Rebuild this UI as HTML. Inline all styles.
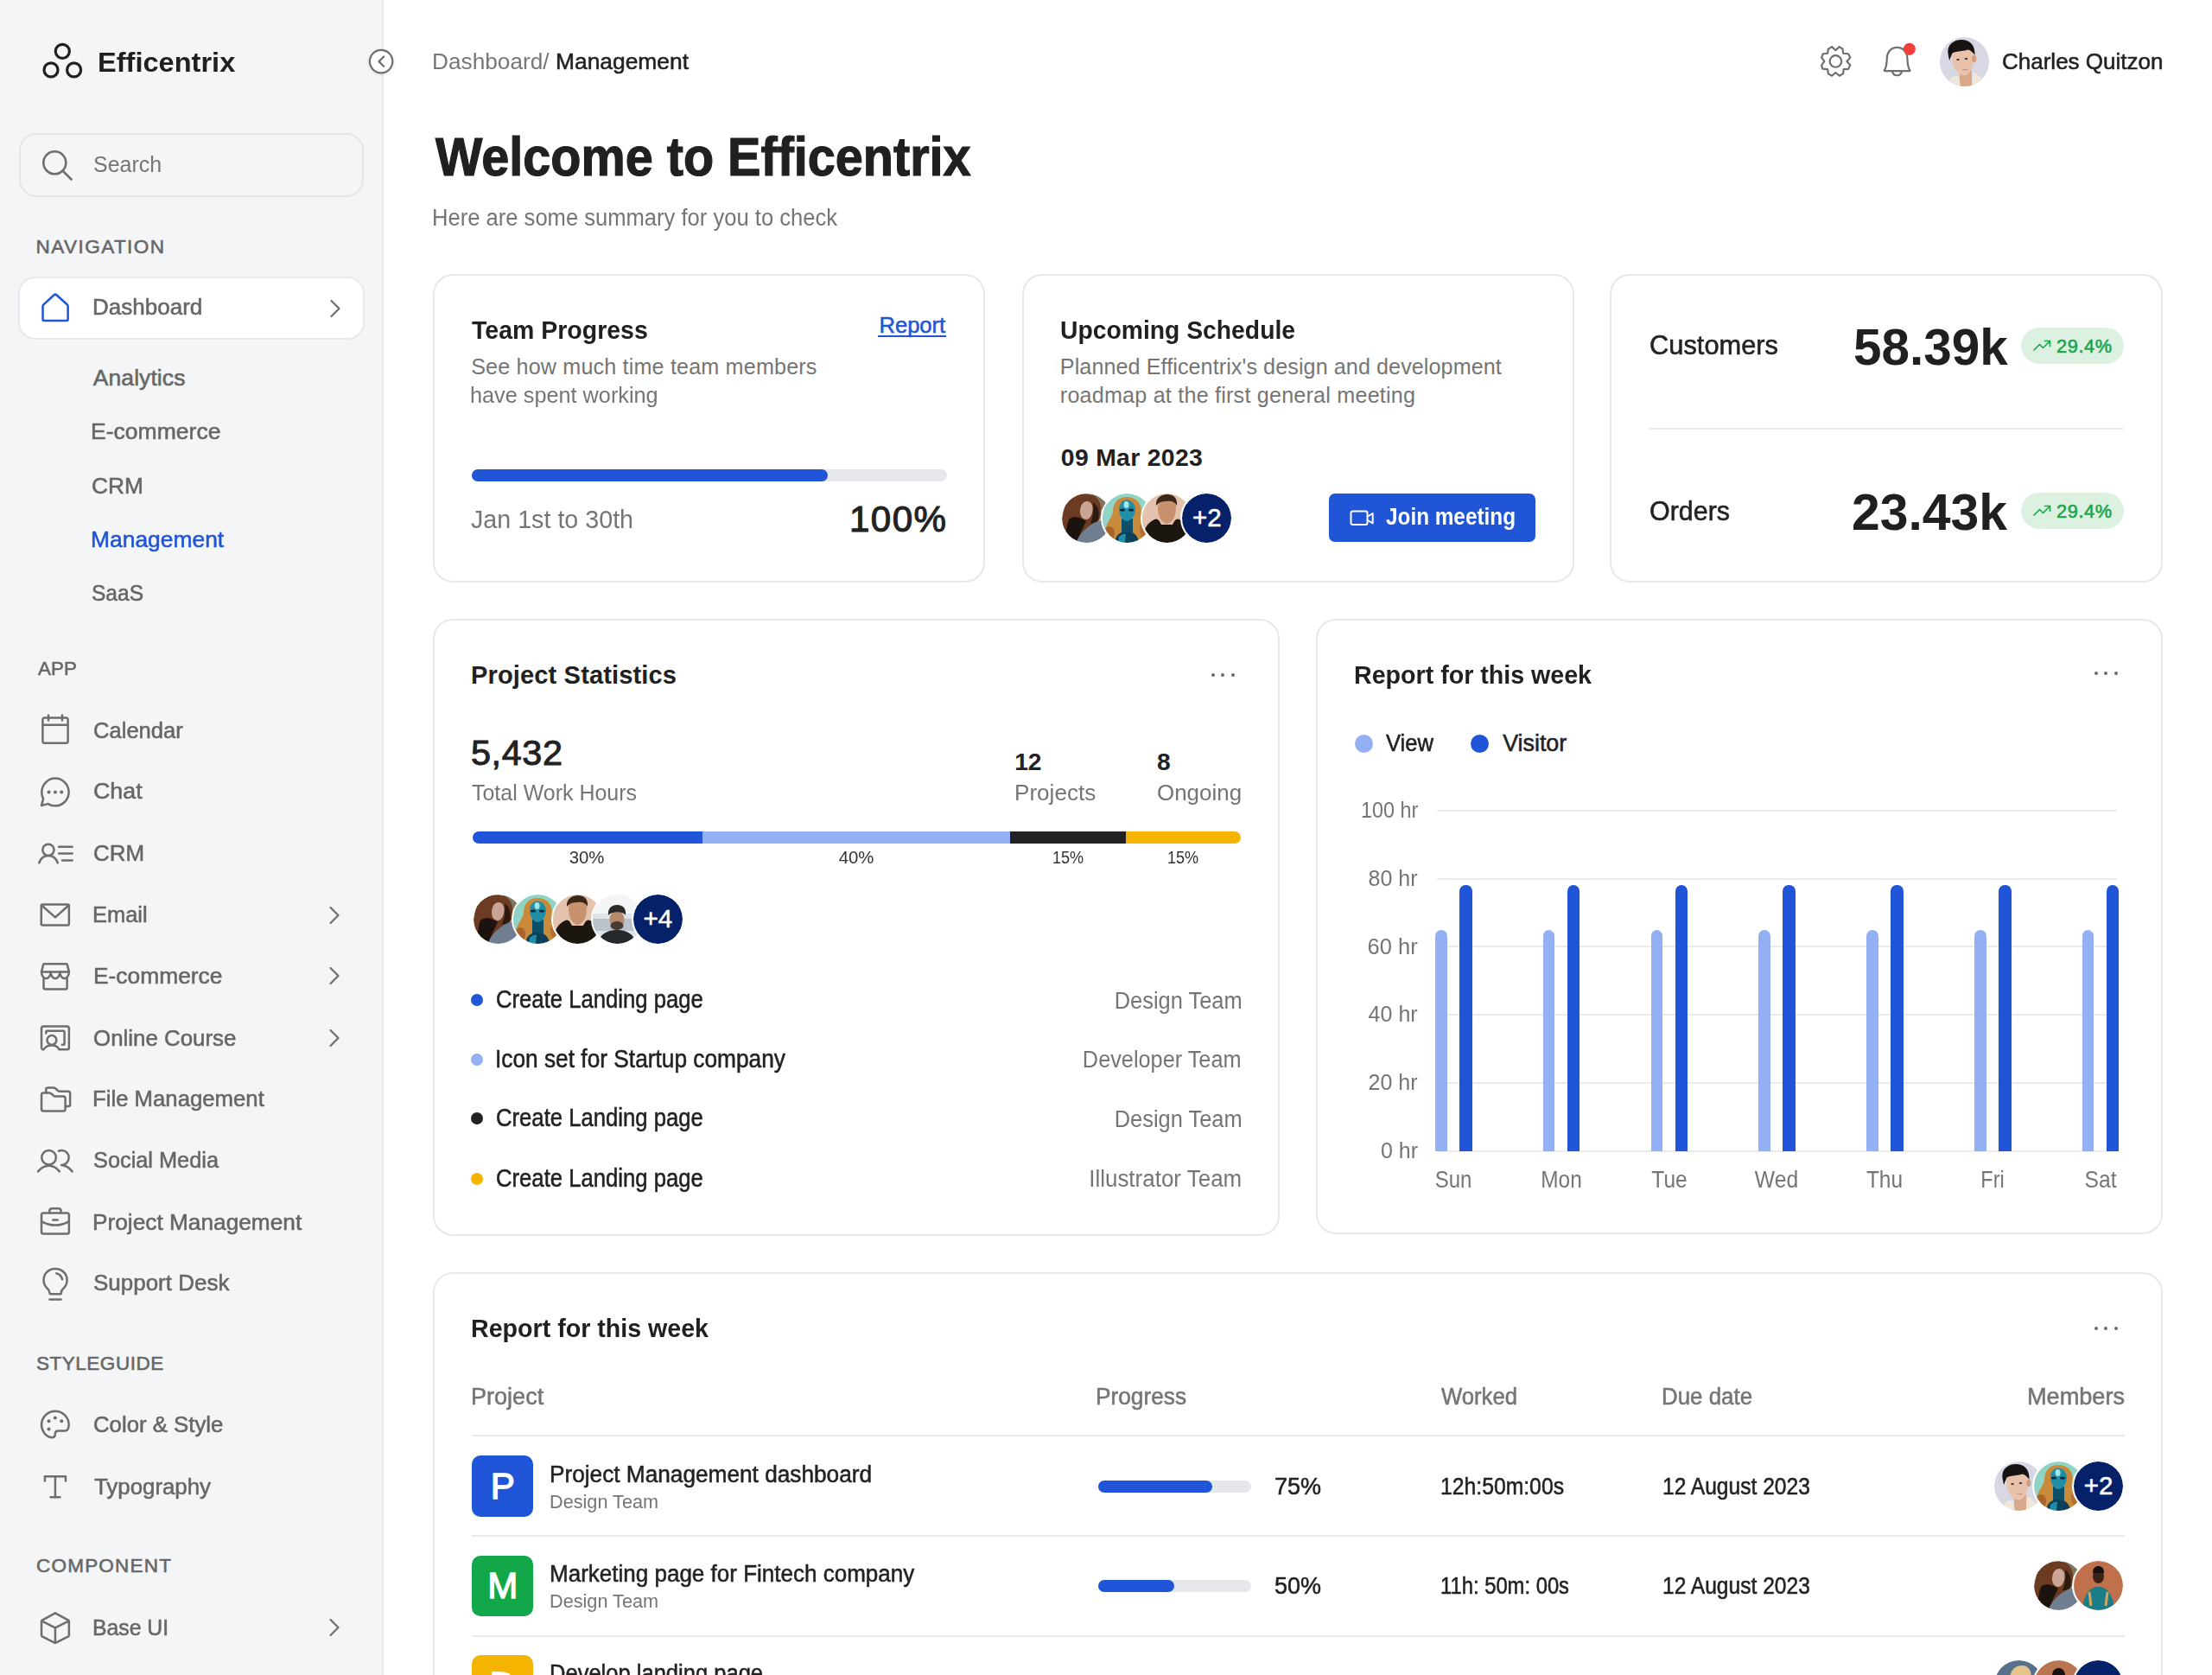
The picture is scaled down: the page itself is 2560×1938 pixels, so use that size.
<!DOCTYPE html>
<html><head><meta charset="utf-8"><title>Efficentrix</title>
<style>
html,body{margin:0;padding:0;width:2560px;height:1938px;overflow:hidden;background:#ffffff;}
body{font-family:"Liberation Sans",sans-serif;}
#root{position:relative;width:2560px;height:1938px;overflow:hidden;}
svg{overflow:visible}
</style></head><body><div id="root">
<div style='position:absolute;left:0px;top:0px;width:442px;height:1938px;background:#f4f5f7;'></div><div style='position:absolute;left:442px;top:0px;width:2px;height:1938px;background:#e9eaed;'></div><svg style='position:absolute;left:40px;top:40px;' width='60' height='60' viewBox='0 0 60 60' fill='none'><circle cx='32.3' cy='19.4' r='8' stroke='#202020' stroke-width='3.2'/><circle cx='19' cy='40.9' r='8' stroke='#202020' stroke-width='3.2'/><circle cx='45.6' cy='40.9' r='8' stroke='#202020' stroke-width='3.2'/></svg><div style='position:absolute;left:22px;top:154px;width:399px;height:74px;box-sizing:border-box;border:2px solid #e4e5e8;border-radius:20px;background:#f4f5f7;'></div><svg style='position:absolute;left:40px;top:165px;' width='50' height='50' viewBox='0 0 50 50' fill='none'><circle cx='23.3' cy='23.3' r='13' stroke='#6e6e6e' stroke-width='2.6'/><path d='M33 33 L42.5 42.5' stroke='#6e6e6e' stroke-width='2.6' stroke-linecap='round'/></svg><div style='position:absolute;left:21px;top:320px;width:401px;height:73px;box-sizing:border-box;border:2px solid #e8e9ec;border-radius:20px;background:#ffffff;'></div><svg style='position:absolute;left:40px;top:334px;' width='50' height='42' viewBox='0 0 1994 1675' fill='none'><path d='M380,810 Q380,760 430,720 L900,290 Q955,240 1010,290 L1490,720 Q1540,760 1540,820 V1420 Q1540,1480 1480,1480 H440 Q380,1480 380,1420 Z' stroke='#1f55d6' stroke-width='100' stroke-linejoin='round' fill='none'/></svg><svg style='position:absolute;left:381.5px;top:347px;' width='12' height='20' viewBox='0 0 12 20' fill='none'><path d='M1.5 1 L10.5 10 L1.5 19' stroke='#6e6e6e' stroke-width='2.2' stroke-linecap='round' stroke-linejoin='round'/></svg><svg style='position:absolute;left:381px;top:1048.7px;' width='12' height='20' viewBox='0 0 12 20' fill='none'><path d='M1.5 1 L10.5 10 L1.5 19' stroke='#6e6e6e' stroke-width='2.2' stroke-linecap='round' stroke-linejoin='round'/></svg><svg style='position:absolute;left:381px;top:1119.2px;' width='12' height='20' viewBox='0 0 12 20' fill='none'><path d='M1.5 1 L10.5 10 L1.5 19' stroke='#6e6e6e' stroke-width='2.2' stroke-linecap='round' stroke-linejoin='round'/></svg><svg style='position:absolute;left:381px;top:1190.9px;' width='12' height='20' viewBox='0 0 12 20' fill='none'><path d='M1.5 1 L10.5 10 L1.5 19' stroke='#6e6e6e' stroke-width='2.2' stroke-linecap='round' stroke-linejoin='round'/></svg><svg style='position:absolute;left:381px;top:1873.3px;' width='12' height='20' viewBox='0 0 12 20' fill='none'><path d='M1.5 1 L10.5 10 L1.5 19' stroke='#6e6e6e' stroke-width='2.2' stroke-linecap='round' stroke-linejoin='round'/></svg><svg style='position:absolute;left:40px;top:820px;' width='50' height='46' viewBox='0 0 1994 1835' fill='none'><g stroke='#6e6e6e' stroke-width='100' stroke-linecap='round' stroke-linejoin='round' fill='none'><rect x='375' y='420' width='1165' height='1170' rx='90'/><path d='M375,745 H1540'/><path d='M640,300 V540 M1275,300 V540'/></g></svg><svg style='position:absolute;left:40px;top:893px;' width='50' height='44' viewBox='0 0 1994 1755' fill='none'><g stroke='#6e6e6e' stroke-width='100' stroke-linecap='round' stroke-linejoin='round' fill='none'><path d='M660,1500 C740,1550 850,1570 955,1570 C1300,1570 1580,1290 1580,940 C1580,590 1300,300 955,300 C610,300 330,590 330,940 C330,1060 360,1160 400,1250 L320,1560 L600,1480 Q630,1470 660,1500 Z'/></g><g fill='#6e6e6e'><circle cx='660' cy='940' r='80'/><circle cx='955' cy='940' r='80'/><circle cx='1245' cy='940' r='80'/></g></svg><svg style='position:absolute;left:40px;top:966px;' width='50' height='42' viewBox='0 0 1994 1675' fill='none'><g stroke='#6e6e6e' stroke-width='100' stroke-linecap='round' stroke-linejoin='round' fill='none'><circle cx='635' cy='690' r='265'/><path d='M210,1290 C280,1090 430,960 640,960 C850,960 990,1080 1070,1290'/><path d='M1120,545 H1740 M1120,860 H1740 M1280,1180 H1740'/></g></svg><svg style='position:absolute;left:40px;top:1038px;' width='50' height='42' viewBox='0 0 1994 1675' fill='none'><g stroke='#6e6e6e' stroke-width='100' stroke-linecap='round' stroke-linejoin='round' fill='none'><rect x='310' y='340' width='1280' height='960' rx='60'/><path d='M350,400 L955,930 L1550,400'/></g></svg><svg style='position:absolute;left:40px;top:1108px;' width='50' height='42' viewBox='0 0 1994 1675' fill='none'><g stroke='#6e6e6e' stroke-width='100' stroke-linecap='round' stroke-linejoin='round' fill='none'><path d='M440,290 H1460 Q1500,290 1510,330 L1590,655 H320 L400,330 Q410,290 440,290 Z'/><path d='M320,655 C320,830 420,960 530,960 C640,960 745,830 745,655 C745,830 850,960 957,960 C1065,960 1170,830 1170,655 C1170,830 1275,960 1380,960 C1490,960 1590,830 1590,655'/><path d='M420,960 V1380 Q420,1460 500,1460 H1420 Q1500,1460 1500,1380 V960'/></g></svg><svg style='position:absolute;left:40px;top:1180px;' width='50' height='42' viewBox='0 0 1994 1675' fill='none'><g stroke='#6e6e6e' stroke-width='100' stroke-linecap='round' stroke-linejoin='round' fill='none'><path d='M320,1280 V400 Q320,300 420,300 H1500 Q1590,300 1590,400 V1290 Q1590,1370 1500,1370 H1140 C1060,1220 950,1180 800,1180 C650,1180 520,1230 450,1330 Q420,1380 380,1375 Q320,1360 320,1280 Z'/><path d='M530,620 V560 Q530,510 580,510 H1340 Q1380,510 1380,560 V1110 Q1380,1150 1340,1150 H1270'/><circle cx='795' cy='935' r='215'/></g></svg><svg style='position:absolute;left:40px;top:1250px;' width='50' height='42' viewBox='0 0 1994 1675' fill='none'><g stroke='#6e6e6e' stroke-width='100' stroke-linecap='round' stroke-linejoin='round' fill='none'><path d='M410,580 H680 Q720,580 760,610 L870,700 Q900,740 950,740 H1330 Q1420,740 1420,830 V1330 Q1420,1420 1330,1420 H410 Q320,1420 320,1330 V670 Q320,580 410,580 Z'/><path d='M530,560 V420 Q530,340 620,340 H880 Q920,340 960,370 L1060,460 Q1100,510 1150,510 H1550 Q1640,510 1640,600 V1120 Q1640,1200 1560,1200 H1430'/></g></svg><svg style='position:absolute;left:40px;top:1322px;' width='50' height='42' viewBox='0 0 1994 1675' fill='none'><g stroke='#6e6e6e' stroke-width='100' stroke-linecap='round' stroke-linejoin='round' fill='none'><circle cx='660' cy='685' r='330'/><path d='M160,1330 C350,1110 500,1070 660,1070 C820,1070 970,1110 1150,1330'/><path d='M1110,390 C1160,370 1210,360 1250,360 C1440,360 1580,510 1580,690 C1580,870 1440,1040 1240,1040 C1420,1060 1550,1100 1740,1330'/></g></svg><svg style='position:absolute;left:40px;top:1392px;' width='50' height='42' viewBox='0 0 1994 1675' fill='none'><g stroke='#6e6e6e' stroke-width='100' stroke-linecap='round' stroke-linejoin='round' fill='none'><rect x='320' y='460' width='1270' height='960' rx='90'/><path d='M690,460 V370 Q690,250 810,250 H1110 Q1220,250 1220,370 V460'/><path d='M320,840 C560,980 760,1020 955,1020 C1150,1020 1350,980 1590,840'/><path d='M850,780 H1060'/></g></svg><svg style='position:absolute;left:40px;top:1462px;' width='50' height='46' viewBox='0 0 1994 1835' fill='none'><g stroke='#6e6e6e' stroke-width='100' stroke-linecap='round' stroke-linejoin='round' fill='none'><path d='M740,1410 H1190 Q1230,1410 1230,1360 Q1230,1230 1330,1150 C1470,1020 1500,880 1500,760 C1500,460 1260,240 955,240 C650,240 420,460 420,760 C420,880 450,1020 590,1150 Q690,1230 700,1360 Q700,1410 740,1410 Z'/><path d='M1010,450 C1160,490 1250,590 1280,730'/><path d='M700,1660 H1220'/></g></svg><svg style='position:absolute;left:40px;top:1625px;' width='50' height='42' viewBox='0 0 1994 1675' fill='none'><g stroke='#6e6e6e' stroke-width='100' stroke-linecap='round' stroke-linejoin='round' fill='none'><path d='M955,310 C1300,310 1580,600 1580,930 C1580,1100 1510,1220 1400,1220 H1080 C990,1220 950,1290 950,1370 C950,1480 890,1530 800,1530 C500,1490 320,1200 320,930 C320,600 600,310 955,310 Z'/></g><g fill='#6e6e6e'><circle cx='950' cy='615' r='80'/><circle cx='660' cy='770' r='80'/><circle cx='1245' cy='770' r='80'/><circle cx='660' cy='1140' r='80'/></g></svg><svg style='position:absolute;left:40px;top:1700px;' width='50' height='42' viewBox='0 0 1994 1675' fill='none'><g stroke='#6e6e6e' stroke-width='100' stroke-linecap='round' stroke-linejoin='round' fill='none'><path d='M475,540 V330 H1435 V540'/><path d='M955,330 V1290'/><path d='M740,1290 H1170'/></g></svg><svg style='position:absolute;left:40px;top:1862px;' width='50' height='42' viewBox='0 0 1994 1675' fill='none'><g stroke='#6e6e6e' stroke-width='100' stroke-linecap='round' stroke-linejoin='round' fill='none'><path d='M955,175 L1560,500 Q1590,520 1590,560 V1190 Q1590,1230 1560,1250 L990,1540 Q955,1560 920,1540 L350,1250 Q320,1230 320,1190 V560 Q320,520 350,500 Z'/><path d='M340,540 L955,850 L1570,540'/><path d='M955,850 V1540'/></g></svg><svg style='position:absolute;left:420px;top:50px;filter:drop-shadow(0 1px 2px rgba(0,0,0,0.08));' width='42' height='42' viewBox='0 0 42 42' fill='none'><circle cx='21.1' cy='21.1' r='13.2' fill='#ffffff' stroke='#6e6e6e' stroke-width='2.2'/><path d='M24.2 15.5 L18.5 21.1 L24.2 26.7' stroke='#6e6e6e' stroke-width='2.2' stroke-linecap='round' stroke-linejoin='round'/></svg><svg style='position:absolute;left:2100px;top:46px;' width='120' height='50' viewBox='0 0 2212 922' fill='none'><path d='M450,225 L530,150 L600,195 L610,290 L720,300 L760,380 L690,460 L760,540 L720,625 L620,630 L610,720 L530,770 L450,700 L370,770 L290,720 L280,630 L170,620 L150,540 L210,460 L150,380 L180,300 L280,290 L290,200 L370,150 Z' stroke='#6e6e6e' stroke-width='40' stroke-linejoin='round'/><circle cx='450' cy='460' r='125' stroke='#6e6e6e' stroke-width='40'/><path d='M1490,650 C1530,600 1540,520 1545,400 C1550,250 1640,165 1760,165 C1880,165 1975,250 1980,400 C1985,520 1995,600 2035,650 Q2045,665 2020,665 L1510,665 Q1480,665 1490,650 Z' stroke='#6e6e6e' stroke-width='40' stroke-linejoin='round'/><path d='M1660,672 C1670,730 1710,760 1760,760 C1810,760 1850,730 1860,672' stroke='#6e6e6e' stroke-width='40'/><circle cx='2025' cy='200' r='130' fill='#ef4040'/></svg><svg style='position:absolute;left:2245.0px;top:42.900000000000006px;' width='57' height='57' viewBox='0 0 57 57' fill='none'><defs><clipPath id='c27'><circle cx='28.5' cy='28.5' r='28.5'/></clipPath></defs><g clip-path='url(#c27)'><rect width='57' height='57' fill='#d8d8e4'/><rect x='23' y='38' width='14' height='20' fill='#d9a78a'/><path d='M8 57 L13 47 C16 45 19 44 22 46 L24 57 Z' fill='#efe6dc'/><path d='M38 41 C42 41 46 45 49 50 L47 57 L37 57 Z' fill='#efe6dc'/><path d='M14 22 C14 14 20 10 28 10 C36 10 40 15 39.5 24 C39 33 35 44 29 44.5 C23 45 16 37 15 31 Z' fill='#e8c2ab'/><ellipse cx='39.8' cy='25' rx='2.6' ry='4' fill='#d39c7c'/><path d='M9.5 19 C8 9 16 3 25 3 C34 3 41 8 40.5 21 C38.5 18 36 15.5 33 14.5 C28 16.5 20 15.5 14.5 18.5 C13 22 12 25 11 27 Z' fill='#171312'/><ellipse cx='21' cy='26' rx='1.8' ry='1' fill='#3a2a24'/><ellipse cx='30.5' cy='25' rx='1.8' ry='1' fill='#3a2a24'/><path d='M26 37 C28 38 31 38 32 37' stroke='#c98a80' stroke-width='1.2' fill='none'/></g></svg><div style='position:absolute;left:501px;top:317px;width:639px;height:357px;box-sizing:border-box;border:2px solid #e7e8eb;border-radius:23px;background:#fff;'></div><div style='position:absolute;left:1183px;top:317px;width:639px;height:357px;box-sizing:border-box;border:2px solid #e7e8eb;border-radius:23px;background:#fff;'></div><div style='position:absolute;left:1863px;top:317px;width:640px;height:357px;box-sizing:border-box;border:2px solid #e7e8eb;border-radius:23px;background:#fff;'></div><div style='position:absolute;left:1016.4px;top:387.8px;width:78.6px;height:2px;background:#1f55d6;'></div><div style='position:absolute;left:546px;top:543px;width:550px;height:14px;background:#e6e7ea;border-radius:7px;'></div><div style='position:absolute;left:546px;top:543px;width:412px;height:14px;background:#1f55d6;border-radius:7px;'></div><svg style='position:absolute;left:1229.3px;top:570.7px;' width='57' height='57' viewBox='0 0 57 57' fill='none'><defs><clipPath id='c34'><circle cx='28.5' cy='28.5' r='28.5'/></clipPath></defs><g clip-path='url(#c34)'><rect width='57' height='57' fill='#bdb6ad'/><path d='M34 0 H57 V22 L44 18 Z' fill='#7a765f'/><path d='M6 8 C12 0 30 -2 38 3 C44 8 46 14 45 24 C44 32 40 36 32 38 C26 44 22 52 18 57 H0 V30 C2 20 3 14 6 8 Z' fill='#6d3a22'/><path d='M8 30 C12 26 20 26 28 32 C24 40 20 48 17 57 H6 C4 48 5 38 8 30 Z' fill='#1b140e'/><path d='M29 9 C33 9 36 13 35.5 19 C35 25 32 30 28 30 C24 30 21 26 21 21 C21 14 24 9 29 9 Z' fill='#caa595'/><path d='M36 10 C42 14 44 22 42 30 C40 34 36 35 33 34 C36 28 37 18 36 10 Z' fill='#2a1a10'/><path d='M16 57 C20 48 26 41 34 36 C40 32 46 30 52 32 L57 36 V57 Z' fill='#6f7e91'/></g><circle cx='28.5' cy='28.5' r='29.5' fill='none' stroke='#fff' stroke-width='2'/></svg><svg style='position:absolute;left:1275.5px;top:570.7px;' width='57' height='57' viewBox='0 0 57 57' fill='none'><defs><clipPath id='c35'><circle cx='28.5' cy='28.5' r='28.5'/></clipPath></defs><g clip-path='url(#c35)'><rect width='57' height='57' fill='#8fd4c4'/><path d='M28 4 C40 4 45 12 45 21 C45 30 50 38 50 48 L46 57 L14 57 C8 52 3 46 4 40 C5 33 11 28 12 21 C12 12 17 4 28 4 Z' fill='#c98b3b'/><ellipse cx='8' cy='46' rx='6' ry='8' fill='#a8642a'/><ellipse cx='47' cy='42' rx='4' ry='9' fill='#b27130'/><rect x='22' y='29' width='13' height='16' fill='#0e4f6a'/><path d='M28 7.5 C34 7.5 38 13 38 19 C38 25 33 32 28.4 32 C23.5 32 19 25 19 19 C19 13 22 7.5 28 7.5 Z' fill='#1f8ea6'/><ellipse cx='27.6' cy='13' rx='3' ry='4' fill='#9fe6ee'/><ellipse cx='23' cy='19' rx='3' ry='1.5' fill='#07233a'/><ellipse cx='33' cy='19' rx='3' ry='1.5' fill='#07233a'/><path d='M14 57 C15 48 20 44 28 44 C36 44 41 48 42 57 Z' fill='#0c3f5c'/><path d='M19 50 C22 47 25 46 27 47 L26 57 L18 57 Z' fill='#1e8fa6'/></g><circle cx='28.5' cy='28.5' r='29.5' fill='none' stroke='#fff' stroke-width='2'/></svg><svg style='position:absolute;left:1321.7px;top:570.7px;' width='57' height='57' viewBox='0 0 57 57' fill='none'><defs><clipPath id='c36'><circle cx='28.5' cy='28.5' r='28.5'/></clipPath></defs><g clip-path='url(#c36)'><rect width='57' height='57' fill='#e3c3ae'/><path d='M18 16 C18 8 23 5 28.5 5 C34 5 39 8 39 16 C39 26 35 34 28.5 35 C22 34 18 26 18 16 Z' fill='#c8926f'/><path d='M0 57 C0 42 6 34 14 30 C18 28 20 32 22 36 H35 C37 32 39 28 43 30 C51 34 57 42 57 57 Z' fill='#1c1611'/><path d='M16 14 C15 5 22 1 29 1 C36 1 41 5 40 14 C38 10 34 8 28 9 C23 9 19 10 16 14 Z' fill='#3b2619'/></g><circle cx='28.5' cy='28.5' r='29.5' fill='none' stroke='#fff' stroke-width='2'/></svg><svg style='position:absolute;left:1367.9px;top:570.7px;' width='57' height='57' viewBox='0 0 57 57' fill='none'><circle cx='28.5' cy='28.5' r='28.5' fill='#04216a'/><circle cx='28.5' cy='28.5' r='29.5' fill='none' stroke='#fff' stroke-width='2'/></svg><div style='position:absolute;left:1538px;top:570.5px;width:239px;height:56.5px;background:#1f55d6;border-radius:7px;'></div><svg style='position:absolute;left:1558px;top:586.3px;' width='36' height='28' viewBox='0 0 36 28' fill='none'><rect x='5.5' y='5.5' width='19' height='15.5' rx='2' stroke='#fff' stroke-width='2'/><path d='M25 11.5 L30.7 8 V19.5 L25 16' stroke='#fff' stroke-width='2' stroke-linejoin='round'/></svg><div style='position:absolute;left:2338.5px;top:379px;width:119.5px;height:42.4px;background:#ddf1e3;border-radius:21px;'></div><svg style='position:absolute;left:2350px;top:388px;' width='28' height='24' viewBox='0 0 28 24' fill='none'><path d='M4 17 L10.5 10.5 L14.5 14.5 L22.5 6.5 M16.5 6.5 H22.5 V12.5' stroke='#17a94a' stroke-width='1.7' stroke-linecap='round' stroke-linejoin='round'/></svg><div style='position:absolute;left:1908px;top:494.5px;width:550px;height:2px;background:#e9eaed;'></div><div style='position:absolute;left:2338.5px;top:570px;width:119.5px;height:42.4px;background:#ddf1e3;border-radius:21px;'></div><svg style='position:absolute;left:2350px;top:579px;' width='28' height='24' viewBox='0 0 28 24' fill='none'><path d='M4 17 L10.5 10.5 L14.5 14.5 L22.5 6.5 M16.5 6.5 H22.5 V12.5' stroke='#17a94a' stroke-width='1.7' stroke-linecap='round' stroke-linejoin='round'/></svg><div style='position:absolute;left:501px;top:716px;width:980px;height:714px;box-sizing:border-box;border:2px solid #e7e8eb;border-radius:23px;background:#fff;'></div><div style='position:absolute;left:1401.7px;top:778.5px;width:4.2px;height:4.2px;border-radius:50%;background:#6a6a6a;'></div><div style='position:absolute;left:1413.1000000000001px;top:778.5px;width:4.2px;height:4.2px;border-radius:50%;background:#6a6a6a;'></div><div style='position:absolute;left:1424.5000000000002px;top:778.5px;width:4.2px;height:4.2px;border-radius:50%;background:#6a6a6a;'></div><div style='position:absolute;left:546.5px;top:962px;width:889.5px;height:14px;border-radius:7px;overflow:hidden;background:linear-gradient(90deg,#1f55d6 0 266.5px,#94b0f4 266.5px 622.5px,#222222 622.5px 756.5px,#f5b400 756.5px);'></div><svg style='position:absolute;left:547.6px;top:1034.7px;' width='57' height='57' viewBox='0 0 57 57' fill='none'><defs><clipPath id='c50'><circle cx='28.5' cy='28.5' r='28.5'/></clipPath></defs><g clip-path='url(#c50)'><rect width='57' height='57' fill='#bdb6ad'/><path d='M34 0 H57 V22 L44 18 Z' fill='#7a765f'/><path d='M6 8 C12 0 30 -2 38 3 C44 8 46 14 45 24 C44 32 40 36 32 38 C26 44 22 52 18 57 H0 V30 C2 20 3 14 6 8 Z' fill='#6d3a22'/><path d='M8 30 C12 26 20 26 28 32 C24 40 20 48 17 57 H6 C4 48 5 38 8 30 Z' fill='#1b140e'/><path d='M29 9 C33 9 36 13 35.5 19 C35 25 32 30 28 30 C24 30 21 26 21 21 C21 14 24 9 29 9 Z' fill='#caa595'/><path d='M36 10 C42 14 44 22 42 30 C40 34 36 35 33 34 C36 28 37 18 36 10 Z' fill='#2a1a10'/><path d='M16 57 C20 48 26 41 34 36 C40 32 46 30 52 32 L57 36 V57 Z' fill='#6f7e91'/></g><circle cx='28.5' cy='28.5' r='29.5' fill='none' stroke='#fff' stroke-width='2'/></svg><svg style='position:absolute;left:593.8px;top:1034.7px;' width='57' height='57' viewBox='0 0 57 57' fill='none'><defs><clipPath id='c51'><circle cx='28.5' cy='28.5' r='28.5'/></clipPath></defs><g clip-path='url(#c51)'><rect width='57' height='57' fill='#8fd4c4'/><path d='M28 4 C40 4 45 12 45 21 C45 30 50 38 50 48 L46 57 L14 57 C8 52 3 46 4 40 C5 33 11 28 12 21 C12 12 17 4 28 4 Z' fill='#c98b3b'/><ellipse cx='8' cy='46' rx='6' ry='8' fill='#a8642a'/><ellipse cx='47' cy='42' rx='4' ry='9' fill='#b27130'/><rect x='22' y='29' width='13' height='16' fill='#0e4f6a'/><path d='M28 7.5 C34 7.5 38 13 38 19 C38 25 33 32 28.4 32 C23.5 32 19 25 19 19 C19 13 22 7.5 28 7.5 Z' fill='#1f8ea6'/><ellipse cx='27.6' cy='13' rx='3' ry='4' fill='#9fe6ee'/><ellipse cx='23' cy='19' rx='3' ry='1.5' fill='#07233a'/><ellipse cx='33' cy='19' rx='3' ry='1.5' fill='#07233a'/><path d='M14 57 C15 48 20 44 28 44 C36 44 41 48 42 57 Z' fill='#0c3f5c'/><path d='M19 50 C22 47 25 46 27 47 L26 57 L18 57 Z' fill='#1e8fa6'/></g><circle cx='28.5' cy='28.5' r='29.5' fill='none' stroke='#fff' stroke-width='2'/></svg><svg style='position:absolute;left:640.0px;top:1034.7px;' width='57' height='57' viewBox='0 0 57 57' fill='none'><defs><clipPath id='c52'><circle cx='28.5' cy='28.5' r='28.5'/></clipPath></defs><g clip-path='url(#c52)'><rect width='57' height='57' fill='#e3c3ae'/><path d='M18 16 C18 8 23 5 28.5 5 C34 5 39 8 39 16 C39 26 35 34 28.5 35 C22 34 18 26 18 16 Z' fill='#c8926f'/><path d='M0 57 C0 42 6 34 14 30 C18 28 20 32 22 36 H35 C37 32 39 28 43 30 C51 34 57 42 57 57 Z' fill='#1c1611'/><path d='M16 14 C15 5 22 1 29 1 C36 1 41 5 40 14 C38 10 34 8 28 9 C23 9 19 10 16 14 Z' fill='#3b2619'/></g><circle cx='28.5' cy='28.5' r='29.5' fill='none' stroke='#fff' stroke-width='2'/></svg><svg style='position:absolute;left:686.3px;top:1034.7px;' width='57' height='57' viewBox='0 0 57 57' fill='none'><defs><clipPath id='c53'><circle cx='28.5' cy='28.5' r='28.5'/></clipPath></defs><g clip-path='url(#c53)'><rect width='57' height='57' fill='#dfe4e8'/><rect x='0' y='0' width='57' height='22' fill='#f3f5f6'/><rect x='0' y='28' width='57' height='14' fill='#b8c3cc'/><path d='M6 57 C8 46 16 41 28 41 C40 41 48 46 50 57 Z' fill='#25282c'/><ellipse cx='28' cy='29' rx='8.5' ry='10.5' fill='#b78a6e'/><ellipse cx='28' cy='36' rx='7.5' ry='5' fill='#4a3a30'/><path d='M18 24 C17 16 22 12 28 12 C35 12 39 16 38 24 C35 19 22 19 18 24 Z' fill='#2e2a27'/></g><circle cx='28.5' cy='28.5' r='29.5' fill='none' stroke='#fff' stroke-width='2'/></svg><svg style='position:absolute;left:732.5px;top:1034.7px;' width='57' height='57' viewBox='0 0 57 57' fill='none'><circle cx='28.5' cy='28.5' r='28.5' fill='#04216a'/><circle cx='28.5' cy='28.5' r='29.5' fill='none' stroke='#fff' stroke-width='2'/></svg><div style='position:absolute;left:545.4px;top:1150px;width:14px;height:14px;border-radius:50%;background:#1f55d6;'></div><div style='position:absolute;left:545.4px;top:1218.6px;width:14px;height:14px;border-radius:50%;background:#94b0f4;'></div><div style='position:absolute;left:545.4px;top:1287px;width:14px;height:14px;border-radius:50%;background:#222222;'></div><div style='position:absolute;left:545.4px;top:1356.5px;width:14px;height:14px;border-radius:50%;background:#f5b400;'></div><div style='position:absolute;left:1523px;top:716px;width:980px;height:712px;box-sizing:border-box;border:2px solid #e7e8eb;border-radius:23px;background:#fff;'></div><div style='position:absolute;left:2423.8px;top:777.3px;width:4.2px;height:4.2px;border-radius:50%;background:#6a6a6a;'></div><div style='position:absolute;left:2435.2000000000003px;top:777.3px;width:4.2px;height:4.2px;border-radius:50%;background:#6a6a6a;'></div><div style='position:absolute;left:2446.6000000000004px;top:777.3px;width:4.2px;height:4.2px;border-radius:50%;background:#6a6a6a;'></div><div style='position:absolute;left:1568.3px;top:849.5px;width:21px;height:21px;border-radius:50%;background:#94b0f4;'></div><div style='position:absolute;left:1702.2px;top:849.5px;width:21px;height:21px;border-radius:50%;background:#1f55d6;'></div><div style='position:absolute;left:1663px;top:937.0px;width:787px;height:2px;background:#ebebee;'></div><div style='position:absolute;left:1663px;top:1015.7px;width:787px;height:2px;background:#ebebee;'></div><div style='position:absolute;left:1663px;top:1094.4px;width:787px;height:2px;background:#ebebee;'></div><div style='position:absolute;left:1663px;top:1173.1px;width:787px;height:2px;background:#ebebee;'></div><div style='position:absolute;left:1663px;top:1251.8px;width:787px;height:2px;background:#ebebee;'></div><div style='position:absolute;left:1663px;top:1330.5px;width:787px;height:2px;background:#ebebee;'></div><div style='position:absolute;left:1661.0px;top:1075.5px;width:13.5px;height:256.0px;background:#94b0f4;border-radius:7px 7px 0 0;'></div><div style='position:absolute;left:1689.0px;top:1024px;width:14.5px;height:307.5px;background:#1f55d6;border-radius:7px 7px 0 0;'></div><div style='position:absolute;left:1785.8px;top:1075.5px;width:13.5px;height:256.0px;background:#94b0f4;border-radius:7px 7px 0 0;'></div><div style='position:absolute;left:1813.8px;top:1024px;width:14.5px;height:307.5px;background:#1f55d6;border-radius:7px 7px 0 0;'></div><div style='position:absolute;left:1910.6px;top:1075.5px;width:13.5px;height:256.0px;background:#94b0f4;border-radius:7px 7px 0 0;'></div><div style='position:absolute;left:1938.6px;top:1024px;width:14.5px;height:307.5px;background:#1f55d6;border-radius:7px 7px 0 0;'></div><div style='position:absolute;left:2035.4px;top:1075.5px;width:13.5px;height:256.0px;background:#94b0f4;border-radius:7px 7px 0 0;'></div><div style='position:absolute;left:2063.4px;top:1024px;width:14.5px;height:307.5px;background:#1f55d6;border-radius:7px 7px 0 0;'></div><div style='position:absolute;left:2160.2px;top:1075.5px;width:13.5px;height:256.0px;background:#94b0f4;border-radius:7px 7px 0 0;'></div><div style='position:absolute;left:2188.2px;top:1024px;width:14.5px;height:307.5px;background:#1f55d6;border-radius:7px 7px 0 0;'></div><div style='position:absolute;left:2285.0px;top:1075.5px;width:13.5px;height:256.0px;background:#94b0f4;border-radius:7px 7px 0 0;'></div><div style='position:absolute;left:2313.0px;top:1024px;width:14.5px;height:307.5px;background:#1f55d6;border-radius:7px 7px 0 0;'></div><div style='position:absolute;left:2409.8px;top:1075.5px;width:13.5px;height:256.0px;background:#94b0f4;border-radius:7px 7px 0 0;'></div><div style='position:absolute;left:2437.8px;top:1024px;width:14.5px;height:307.5px;background:#1f55d6;border-radius:7px 7px 0 0;'></div><div style='position:absolute;left:501px;top:1472px;width:2002px;height:600px;box-sizing:border-box;border:2px solid #e7e8eb;border-radius:23px;background:#fff;'></div><div style='position:absolute;left:2423.8px;top:1534.5px;width:4.2px;height:4.2px;border-radius:50%;background:#6a6a6a;'></div><div style='position:absolute;left:2435.2000000000003px;top:1534.5px;width:4.2px;height:4.2px;border-radius:50%;background:#6a6a6a;'></div><div style='position:absolute;left:2446.6000000000004px;top:1534.5px;width:4.2px;height:4.2px;border-radius:50%;background:#6a6a6a;'></div><div style='position:absolute;left:546px;top:1660px;width:1913px;height:2px;background:#e9eaed;'></div><div style='position:absolute;left:546px;top:1776px;width:1913px;height:2px;background:#e9eaed;'></div><div style='position:absolute;left:546px;top:1891.5px;width:1913px;height:2px;background:#e9eaed;'></div><div style='position:absolute;left:546.4px;top:1684.3px;width:70.6px;height:70.6px;background:#1f55d6;border-radius:10px;'></div><div style='position:absolute;left:1270.5px;top:1712.5px;width:177px;height:14px;background:#e6e7ea;border-radius:7px;'></div><div style='position:absolute;left:1270.5px;top:1712.5px;width:132.5px;height:14px;background:#1f55d6;border-radius:7px;'></div><svg style='position:absolute;left:2307.5px;top:1690.8999999999999px;' width='57' height='57' viewBox='0 0 57 57' fill='none'><defs><clipPath id='c95'><circle cx='28.5' cy='28.5' r='28.5'/></clipPath></defs><g clip-path='url(#c95)'><rect width='57' height='57' fill='#d8d8e4'/><rect x='23' y='38' width='14' height='20' fill='#d9a78a'/><path d='M8 57 L13 47 C16 45 19 44 22 46 L24 57 Z' fill='#efe6dc'/><path d='M38 41 C42 41 46 45 49 50 L47 57 L37 57 Z' fill='#efe6dc'/><path d='M14 22 C14 14 20 10 28 10 C36 10 40 15 39.5 24 C39 33 35 44 29 44.5 C23 45 16 37 15 31 Z' fill='#e8c2ab'/><ellipse cx='39.8' cy='25' rx='2.6' ry='4' fill='#d39c7c'/><path d='M9.5 19 C8 9 16 3 25 3 C34 3 41 8 40.5 21 C38.5 18 36 15.5 33 14.5 C28 16.5 20 15.5 14.5 18.5 C13 22 12 25 11 27 Z' fill='#171312'/><ellipse cx='21' cy='26' rx='1.8' ry='1' fill='#3a2a24'/><ellipse cx='30.5' cy='25' rx='1.8' ry='1' fill='#3a2a24'/><path d='M26 37 C28 38 31 38 32 37' stroke='#c98a80' stroke-width='1.2' fill='none'/></g><circle cx='28.5' cy='28.5' r='29.5' fill='none' stroke='#fff' stroke-width='2'/></svg><svg style='position:absolute;left:2353.5px;top:1690.8999999999999px;' width='57' height='57' viewBox='0 0 57 57' fill='none'><defs><clipPath id='c96'><circle cx='28.5' cy='28.5' r='28.5'/></clipPath></defs><g clip-path='url(#c96)'><rect width='57' height='57' fill='#8fd4c4'/><path d='M28 4 C40 4 45 12 45 21 C45 30 50 38 50 48 L46 57 L14 57 C8 52 3 46 4 40 C5 33 11 28 12 21 C12 12 17 4 28 4 Z' fill='#c98b3b'/><ellipse cx='8' cy='46' rx='6' ry='8' fill='#a8642a'/><ellipse cx='47' cy='42' rx='4' ry='9' fill='#b27130'/><rect x='22' y='29' width='13' height='16' fill='#0e4f6a'/><path d='M28 7.5 C34 7.5 38 13 38 19 C38 25 33 32 28.4 32 C23.5 32 19 25 19 19 C19 13 22 7.5 28 7.5 Z' fill='#1f8ea6'/><ellipse cx='27.6' cy='13' rx='3' ry='4' fill='#9fe6ee'/><ellipse cx='23' cy='19' rx='3' ry='1.5' fill='#07233a'/><ellipse cx='33' cy='19' rx='3' ry='1.5' fill='#07233a'/><path d='M14 57 C15 48 20 44 28 44 C36 44 41 48 42 57 Z' fill='#0c3f5c'/><path d='M19 50 C22 47 25 46 27 47 L26 57 L18 57 Z' fill='#1e8fa6'/></g><circle cx='28.5' cy='28.5' r='29.5' fill='none' stroke='#fff' stroke-width='2'/></svg><svg style='position:absolute;left:2399.6px;top:1690.8999999999999px;' width='57' height='57' viewBox='0 0 57 57' fill='none'><circle cx='28.5' cy='28.5' r='28.5' fill='#04216a'/><circle cx='28.5' cy='28.5' r='29.5' fill='none' stroke='#fff' stroke-width='2'/></svg><div style='position:absolute;left:546.4px;top:1799.5px;width:70.6px;height:70.6px;background:#12a84a;border-radius:10px;'></div><div style='position:absolute;left:1270.5px;top:1827.7px;width:177px;height:14px;background:#e6e7ea;border-radius:7px;'></div><div style='position:absolute;left:1270.5px;top:1827.7px;width:88.5px;height:14px;background:#1f55d6;border-radius:7px;'></div><svg style='position:absolute;left:2353.5px;top:1806.1px;' width='57' height='57' viewBox='0 0 57 57' fill='none'><defs><clipPath id='c101'><circle cx='28.5' cy='28.5' r='28.5'/></clipPath></defs><g clip-path='url(#c101)'><rect width='57' height='57' fill='#bdb6ad'/><path d='M34 0 H57 V22 L44 18 Z' fill='#7a765f'/><path d='M6 8 C12 0 30 -2 38 3 C44 8 46 14 45 24 C44 32 40 36 32 38 C26 44 22 52 18 57 H0 V30 C2 20 3 14 6 8 Z' fill='#6d3a22'/><path d='M8 30 C12 26 20 26 28 32 C24 40 20 48 17 57 H6 C4 48 5 38 8 30 Z' fill='#1b140e'/><path d='M29 9 C33 9 36 13 35.5 19 C35 25 32 30 28 30 C24 30 21 26 21 21 C21 14 24 9 29 9 Z' fill='#caa595'/><path d='M36 10 C42 14 44 22 42 30 C40 34 36 35 33 34 C36 28 37 18 36 10 Z' fill='#2a1a10'/><path d='M16 57 C20 48 26 41 34 36 C40 32 46 30 52 32 L57 36 V57 Z' fill='#6f7e91'/></g><circle cx='28.5' cy='28.5' r='29.5' fill='none' stroke='#fff' stroke-width='2'/></svg><svg style='position:absolute;left:2399.6px;top:1806.1px;' width='57' height='57' viewBox='0 0 57 57' fill='none'><defs><clipPath id='c102'><circle cx='28.5' cy='28.5' r='28.5'/></clipPath></defs><g clip-path='url(#c102)'><rect width='57' height='57' fill='#c0714b'/><path d='M10 57 C11 40 18 30 28.5 30 C39 30 46 40 47 57 Z' fill='#1a7d87'/><path d='M18 36 L20 52 M39 36 L37 52' stroke='#d9a35a' stroke-width='3'/><ellipse cx='28.5' cy='18' rx='6.5' ry='8' fill='#3a2218'/><path d='M22 14 C22 8 25 6 28.5 6 C32 6 35 8 35 14 Z' fill='#1a1210'/></g><circle cx='28.5' cy='28.5' r='29.5' fill='none' stroke='#fff' stroke-width='2'/></svg><div style='position:absolute;left:546.4px;top:1914.8px;width:70.6px;height:70.6px;background:#f5b400;border-radius:10px;'></div><div style='position:absolute;left:1270.5px;top:1943.0px;width:177px;height:14px;background:#e6e7ea;border-radius:7px;'></div><div style='position:absolute;left:1270.5px;top:1943.0px;width:44px;height:14px;background:#1f55d6;border-radius:7px;'></div><svg style='position:absolute;left:2307.5px;top:1921.3999999999999px;' width='57' height='57' viewBox='0 0 57 57' fill='none'><defs><clipPath id='c106'><circle cx='28.5' cy='28.5' r='28.5'/></clipPath></defs><g clip-path='url(#c106)'><rect width='57' height='57' fill='#57718a'/><path d='M8 57 C10 44 18 38 30 38 C42 38 50 44 52 57 Z' fill='#3c5064'/><ellipse cx='30' cy='28' rx='10' ry='12' fill='#d9b49a'/><path d='M18 22 C18 10 26 6 32 6 C40 6 44 12 42 22 C38 16 24 16 18 22 Z' fill='#e3c589'/></g><circle cx='28.5' cy='28.5' r='29.5' fill='none' stroke='#fff' stroke-width='2'/></svg><svg style='position:absolute;left:2353.5px;top:1921.3999999999999px;' width='57' height='57' viewBox='0 0 57 57' fill='none'><defs><clipPath id='c107'><circle cx='28.5' cy='28.5' r='28.5'/></clipPath></defs><g clip-path='url(#c107)'><rect width='57' height='57' fill='#b9754f'/><path d='M10 57 C11 42 18 36 28.5 36 C39 36 46 42 47 57 Z' fill='#c98a62'/><ellipse cx='28.5' cy='22' rx='7' ry='9' fill='#3b2318'/><path d='M21 18 C21 11 25 9 28.5 9 C32 9 36 11 36 18 Z' fill='#1a1210'/></g><circle cx='28.5' cy='28.5' r='29.5' fill='none' stroke='#fff' stroke-width='2'/></svg><svg style='position:absolute;left:2399.6px;top:1921.3999999999999px;' width='57' height='57' viewBox='0 0 57 57' fill='none'><circle cx='28.5' cy='28.5' r='28.5' fill='#04216a'/><circle cx='28.5' cy='28.5' r='29.5' fill='none' stroke='#fff' stroke-width='2'/></svg><div id='t0' style='position:absolute;top:55.99px;font-size:32.27px;line-height:32.27px;font-weight:700;color:#202020;white-space:nowrap;letter-spacing:0.000px;transform:scaleX(1.0092);left:113.00px;transform-origin:0 0;'>Efficentrix</div><div id='t1' style='position:absolute;top:178.17px;font-size:25.44px;line-height:25.44px;font-weight:400;color:#757575;white-space:nowrap;letter-spacing:0.000px;transform:scaleX(0.9807);left:108.00px;transform-origin:0 0;'>Search</div><div id='t2' style='position:absolute;top:274.83px;font-size:22.53px;line-height:22.53px;font-weight:400;-webkit-text-stroke-width:0.55px;color:#666666;white-space:nowrap;letter-spacing:1.430px;left:41.60px;transform-origin:0 0;'>NAVIGATION</div><div id='t3' style='position:absolute;top:763.23px;font-size:22.53px;line-height:22.53px;font-weight:400;-webkit-text-stroke-width:0.55px;color:#666666;white-space:nowrap;letter-spacing:0.000px;transform:scaleX(0.9948);left:44.00px;transform-origin:0 0;'>APP</div><div id='t4' style='position:absolute;top:1567.23px;font-size:22.53px;line-height:22.53px;font-weight:400;-webkit-text-stroke-width:0.55px;color:#666666;white-space:nowrap;letter-spacing:0.507px;left:42.00px;transform-origin:0 0;'>STYLEGUIDE</div><div id='t5' style='position:absolute;top:1801.13px;font-size:22.53px;line-height:22.53px;font-weight:400;-webkit-text-stroke-width:0.55px;color:#666666;white-space:nowrap;letter-spacing:1.205px;left:42.00px;transform-origin:0 0;'>COMPONENT</div><div id='t6' style='position:absolute;top:342.35px;font-size:26.16px;line-height:26.16px;font-weight:400;-webkit-text-stroke-width:0.55px;color:#666666;white-space:nowrap;letter-spacing:0.000px;transform:scaleX(0.9946);left:107.00px;transform-origin:0 0;'>Dashboard</div><div id='t7' style='position:absolute;top:423.61px;font-size:26.45px;line-height:26.45px;font-weight:400;-webkit-text-stroke-width:0.55px;color:#666666;white-space:nowrap;letter-spacing:0.100px;left:107.80px;transform-origin:0 0;'>Analytics</div><div id='t8' style='position:absolute;top:486.21px;font-size:26.45px;line-height:26.45px;font-weight:400;-webkit-text-stroke-width:0.55px;color:#666666;white-space:nowrap;letter-spacing:0.000px;transform:scaleX(1.0041);left:104.80px;transform-origin:0 0;'>E-commerce</div><div id='t9' style='position:absolute;top:548.61px;font-size:26.45px;line-height:26.45px;font-weight:400;-webkit-text-stroke-width:0.55px;color:#666666;white-space:nowrap;letter-spacing:0.000px;transform:scaleX(0.9948);left:105.80px;transform-origin:0 0;'>CRM</div><div id='t10' style='position:absolute;top:610.91px;font-size:26.45px;line-height:26.45px;font-weight:400;-webkit-text-stroke-width:0.55px;color:#1f55d6;white-space:nowrap;letter-spacing:0.000px;transform:scaleX(0.9993);left:104.80px;transform-origin:0 0;'>Management</div><div id='t11' style='position:absolute;top:672.61px;font-size:26.45px;line-height:26.45px;font-weight:400;-webkit-text-stroke-width:0.55px;color:#666666;white-space:nowrap;letter-spacing:0.000px;transform:scaleX(0.9286);left:105.80px;transform-origin:0 0;'>SaaS</div><div id='t12' style='position:absolute;top:831.61px;font-size:26.45px;line-height:26.45px;font-weight:400;-webkit-text-stroke-width:0.55px;color:#666666;white-space:nowrap;letter-spacing:0.000px;transform:scaleX(0.9675);left:108.00px;transform-origin:0 0;'>Calendar</div><div id='t13' style='position:absolute;top:902.41px;font-size:26.45px;line-height:26.45px;font-weight:400;-webkit-text-stroke-width:0.55px;color:#666666;white-space:nowrap;letter-spacing:0.000px;transform:scaleX(1.0136);left:108.00px;transform-origin:0 0;'>Chat</div><div id='t14' style='position:absolute;top:973.81px;font-size:26.45px;line-height:26.45px;font-weight:400;-webkit-text-stroke-width:0.55px;color:#666666;white-space:nowrap;letter-spacing:0.000px;transform:scaleX(0.9826);left:108.00px;transform-origin:0 0;'>CRM</div><div id='t15' style='position:absolute;top:1045.31px;font-size:26.45px;line-height:26.45px;font-weight:400;-webkit-text-stroke-width:0.55px;color:#666666;white-space:nowrap;letter-spacing:0.000px;transform:scaleX(0.9618);left:107.00px;transform-origin:0 0;'>Email</div><div id='t16' style='position:absolute;top:1115.81px;font-size:26.45px;line-height:26.45px;font-weight:400;-webkit-text-stroke-width:0.55px;color:#666666;white-space:nowrap;letter-spacing:0.000px;transform:scaleX(0.9973);left:108.00px;transform-origin:0 0;'>E-commerce</div><div id='t17' style='position:absolute;top:1187.51px;font-size:26.45px;line-height:26.45px;font-weight:400;-webkit-text-stroke-width:0.55px;color:#666666;white-space:nowrap;letter-spacing:0.000px;transform:scaleX(0.9788);left:108.00px;transform-origin:0 0;'>Online Course</div><div id='t18' style='position:absolute;top:1258.41px;font-size:26.45px;line-height:26.45px;font-weight:400;-webkit-text-stroke-width:0.55px;color:#666666;white-space:nowrap;letter-spacing:0.000px;transform:scaleX(0.9733);left:107.00px;transform-origin:0 0;'>File Management</div><div id='t19' style='position:absolute;top:1329.11px;font-size:26.45px;line-height:26.45px;font-weight:400;-webkit-text-stroke-width:0.55px;color:#666666;white-space:nowrap;letter-spacing:0.000px;transform:scaleX(0.9580);left:108.00px;transform-origin:0 0;'>Social Media</div><div id='t20' style='position:absolute;top:1400.61px;font-size:26.45px;line-height:26.45px;font-weight:400;-webkit-text-stroke-width:0.55px;color:#666666;white-space:nowrap;letter-spacing:0.000px;transform:scaleX(0.9929);left:107.00px;transform-origin:0 0;'>Project Management</div><div id='t21' style='position:absolute;top:1470.51px;font-size:26.45px;line-height:26.45px;font-weight:400;-webkit-text-stroke-width:0.55px;color:#666666;white-space:nowrap;letter-spacing:0.000px;transform:scaleX(0.9826);left:108.00px;transform-origin:0 0;'>Support Desk</div><div id='t22' style='position:absolute;top:1635.31px;font-size:26.45px;line-height:26.45px;font-weight:400;-webkit-text-stroke-width:0.55px;color:#666666;white-space:nowrap;letter-spacing:0.000px;transform:scaleX(0.9750);left:108.00px;transform-origin:0 0;'>Color &amp; Style</div><div id='t23' style='position:absolute;top:1707.21px;font-size:26.45px;line-height:26.45px;font-weight:400;-webkit-text-stroke-width:0.55px;color:#666666;white-space:nowrap;letter-spacing:0.000px;transform:scaleX(0.9772);left:109.00px;transform-origin:0 0;'>Typography</div><div id='t24' style='position:absolute;top:1869.91px;font-size:26.45px;line-height:26.45px;font-weight:400;-webkit-text-stroke-width:0.55px;color:#666666;white-space:nowrap;letter-spacing:0.000px;transform:scaleX(0.9371);left:107.00px;transform-origin:0 0;'>Base UI</div><div id='t25' style='position:absolute;top:57.65px;font-size:26.16px;line-height:26.16px;font-weight:400;color:#777777;white-space:nowrap;letter-spacing:0.000px;transform:scaleX(1.0030);left:500.40px;transform-origin:0 0;'>Dashboard/</div><div id='t26' style='position:absolute;top:57.65px;font-size:26.16px;line-height:26.16px;font-weight:400;-webkit-text-stroke-width:0.55px;color:#222222;white-space:nowrap;letter-spacing:0.000px;transform:scaleX(1.0089);left:642.80px;transform-origin:0 0;'>Management</div><div id='t27' style='position:absolute;top:57.85px;font-size:26.16px;line-height:26.16px;font-weight:400;-webkit-text-stroke-width:0.55px;color:#222222;white-space:nowrap;letter-spacing:0.000px;transform:scaleX(0.9940);left:2316.60px;transform-origin:0 0;'>Charles Quitzon</div><div id='t28' style='position:absolute;top:150.09px;font-size:62.50px;line-height:62.50px;font-weight:700;color:#202020;white-space:nowrap;letter-spacing:0.000px;-webkit-text-stroke-width:1.2px;transform:scaleX(0.9212);left:503.60px;transform-origin:0 0;'>Welcome to Efficentrix</div><div id='t29' style='position:absolute;top:239.46px;font-size:26.74px;line-height:26.74px;font-weight:400;color:#757575;white-space:nowrap;letter-spacing:0.000px;transform:scaleX(0.9566);left:500.00px;transform-origin:0 0;'>Here are some summary for you to check</div><div id='t30' style='position:absolute;top:367.76px;font-size:28.63px;line-height:28.63px;font-weight:700;color:#202020;white-space:nowrap;letter-spacing:0.000px;transform:scaleX(0.9955);left:546.20px;transform-origin:0 0;'>Team Progress</div><div id='t31' style='position:absolute;top:364.35px;font-size:25.58px;line-height:25.58px;font-weight:400;-webkit-text-stroke-width:0.55px;color:#1f55d6;white-space:nowrap;letter-spacing:-0.076px;left:1017.60px;transform-origin:0 0;'>Report</div><div id='t32' style='position:absolute;top:412.11px;font-size:25.15px;line-height:25.15px;font-weight:400;color:#757575;white-space:nowrap;letter-spacing:0.165px;left:545.20px;transform-origin:0 0;'>See how much time team members</div><div id='t33' style='position:absolute;top:445.41px;font-size:25.15px;line-height:25.15px;font-weight:400;color:#757575;white-space:nowrap;letter-spacing:0.000px;transform:scaleX(1.0047);left:544.20px;transform-origin:0 0;'>have spent working</div><div id='t34' style='position:absolute;top:586.79px;font-size:29.07px;line-height:29.07px;font-weight:400;color:#757575;white-space:nowrap;letter-spacing:0.000px;transform:scaleX(0.9863);left:545.20px;transform-origin:0 0;'>Jan 1st to 30th</div><div id='t35' style='position:absolute;top:580.12px;font-size:42.15px;line-height:42.15px;font-weight:400;color:#222222;white-space:nowrap;letter-spacing:1.406px;-webkit-text-stroke-width:1.1px;right:1463.59px;transform-origin:100% 0;'>100%</div><div id='t36' style='position:absolute;top:367.76px;font-size:28.63px;line-height:28.63px;font-weight:700;color:#202020;white-space:nowrap;letter-spacing:0.000px;transform:scaleX(0.9886);left:1226.80px;transform-origin:0 0;'>Upcoming Schedule</div><div id='t37' style='position:absolute;top:412.11px;font-size:25.15px;line-height:25.15px;font-weight:400;color:#757575;white-space:nowrap;letter-spacing:0.082px;left:1226.80px;transform-origin:0 0;'>Planned Efficentrix&#39;s design and development</div><div id='t38' style='position:absolute;top:445.41px;font-size:25.15px;line-height:25.15px;font-weight:400;color:#757575;white-space:nowrap;letter-spacing:0.209px;left:1226.80px;transform-origin:0 0;'>roadmap at the first general meeting</div><div id='t39' style='position:absolute;top:515.01px;font-size:28.34px;line-height:28.34px;font-weight:700;color:#202020;white-space:nowrap;letter-spacing:0.334px;left:1227.80px;transform-origin:0 0;'>09 Mar 2023</div><div id='t40' style='position:absolute;top:584.02px;font-size:29.51px;line-height:29.51px;font-weight:400;-webkit-text-stroke-width:0.55px;color:#ffffff;white-space:nowrap;letter-spacing:0.000px;left:396.80px;width:2000px;text-align:center;transform-origin:50% 0;'>+2</div><div id='t41' style='position:absolute;top:585.24px;font-size:26.89px;line-height:26.89px;font-weight:700;color:#ffffff;white-space:nowrap;letter-spacing:0.000px;transform:scaleX(0.9049);left:1604.00px;transform-origin:0 0;'>Join meeting</div><div id='t42' style='position:absolute;top:384.16px;font-size:30.52px;line-height:30.52px;font-weight:400;-webkit-text-stroke-width:0.55px;color:#222222;white-space:nowrap;letter-spacing:0.000px;transform:scaleX(1.0101);left:1908.60px;transform-origin:0 0;'>Customers</div><div id='t43' style='position:absolute;top:371.85px;font-size:59.59px;line-height:59.59px;font-weight:700;color:#202020;white-space:nowrap;letter-spacing:0.000px;transform:scaleX(0.9802);left:2145.00px;transform-origin:0 0;'>58.39k</div><div id='t44' style='position:absolute;top:389.54px;font-size:21.80px;line-height:21.80px;font-weight:400;-webkit-text-stroke-width:0.55px;color:#19a54a;white-space:nowrap;letter-spacing:0.597px;left:2380.00px;transform-origin:0 0;'>29.4%</div><div id='t45' style='position:absolute;top:576.16px;font-size:30.52px;line-height:30.52px;font-weight:400;-webkit-text-stroke-width:0.55px;color:#222222;white-space:nowrap;letter-spacing:0.000px;transform:scaleX(0.9974);left:1908.60px;transform-origin:0 0;'>Orders</div><div id='t46' style='position:absolute;top:562.55px;font-size:59.59px;line-height:59.59px;font-weight:700;color:#202020;white-space:nowrap;letter-spacing:0.000px;transform:scaleX(0.9879);left:2143.00px;transform-origin:0 0;'>23.43k</div><div id='t47' style='position:absolute;top:580.54px;font-size:21.80px;line-height:21.80px;font-weight:400;-webkit-text-stroke-width:0.55px;color:#19a54a;white-space:nowrap;letter-spacing:0.597px;left:2380.00px;transform-origin:0 0;'>29.4%</div><div id='t48' style='position:absolute;top:766.79px;font-size:29.07px;line-height:29.07px;font-weight:700;color:#202020;white-space:nowrap;letter-spacing:0.128px;left:545.00px;transform-origin:0 0;'>Project Statistics</div><div id='t49' style='position:absolute;top:851.23px;font-size:41.42px;line-height:41.42px;font-weight:400;color:#222222;white-space:nowrap;letter-spacing:0.594px;-webkit-text-stroke-width:1px;left:545.00px;transform-origin:0 0;'>5,432</div><div id='t50' style='position:absolute;top:903.85px;font-size:26.16px;line-height:26.16px;font-weight:400;color:#757575;white-space:nowrap;letter-spacing:0.000px;transform:scaleX(0.9545);left:546.00px;transform-origin:0 0;'>Total Work Hours</div><div id='t51' style='position:absolute;top:866.93px;font-size:28.20px;line-height:28.20px;font-weight:700;color:#222222;white-space:nowrap;letter-spacing:0.000px;left:1174.20px;transform-origin:0 0;'>12</div><div id='t52' style='position:absolute;top:903.85px;font-size:26.16px;line-height:26.16px;font-weight:400;color:#757575;white-space:nowrap;letter-spacing:0.000px;transform:scaleX(0.9978);left:1174.20px;transform-origin:0 0;'>Projects</div><div id='t53' style='position:absolute;top:866.93px;font-size:28.20px;line-height:28.20px;font-weight:700;color:#222222;white-space:nowrap;letter-spacing:0.000px;left:1339.00px;transform-origin:0 0;'>8</div><div id='t54' style='position:absolute;top:903.85px;font-size:26.16px;line-height:26.16px;font-weight:400;color:#757575;white-space:nowrap;letter-spacing:0.000px;transform:scaleX(0.9921);left:1339.00px;transform-origin:0 0;'>Ongoing</div><div id='t55' style='position:absolute;top:980.56px;font-size:21.08px;line-height:21.08px;font-weight:400;color:#333333;white-space:nowrap;letter-spacing:0.000px;transform:scaleX(0.9647);left:-320.70px;width:2000px;text-align:center;transform-origin:50% 0;'>30%</div><div id='t56' style='position:absolute;top:980.56px;font-size:21.08px;line-height:21.08px;font-weight:400;color:#333333;white-space:nowrap;letter-spacing:0.000px;transform:scaleX(0.9647);left:-9.00px;width:2000px;text-align:center;transform-origin:50% 0;'>40%</div><div id='t57' style='position:absolute;top:980.56px;font-size:21.08px;line-height:21.08px;font-weight:400;color:#333333;white-space:nowrap;letter-spacing:0.000px;transform:scaleX(0.8581);left:236.00px;width:2000px;text-align:center;transform-origin:50% 0;'>15%</div><div id='t58' style='position:absolute;top:980.56px;font-size:21.08px;line-height:21.08px;font-weight:400;color:#333333;white-space:nowrap;letter-spacing:0.000px;transform:scaleX(0.8581);left:369.30px;width:2000px;text-align:center;transform-origin:50% 0;'>15%</div><div id='t59' style='position:absolute;top:1048.02px;font-size:29.51px;line-height:29.51px;font-weight:400;-webkit-text-stroke-width:0.55px;color:#ffffff;white-space:nowrap;letter-spacing:0.000px;left:-238.60px;width:2000px;text-align:center;transform-origin:50% 0;'>+4</div><div id='t60' style='position:absolute;top:1142.39px;font-size:29.07px;line-height:29.07px;font-weight:400;-webkit-text-stroke-width:0.55px;color:#222222;white-space:nowrap;letter-spacing:0.000px;transform:scaleX(0.8834);left:574.00px;transform-origin:0 0;'>Create Landing page</div><div id='t61' style='position:absolute;top:1143.62px;font-size:27.62px;line-height:27.62px;font-weight:400;color:#757575;white-space:nowrap;letter-spacing:0.000px;transform:scaleX(0.9206);right:1122.20px;transform-origin:100% 0;'>Design Team</div><div id='t62' style='position:absolute;top:1210.99px;font-size:29.07px;line-height:29.07px;font-weight:400;-webkit-text-stroke-width:0.55px;color:#222222;white-space:nowrap;letter-spacing:0.000px;transform:scaleX(0.9043);left:573.00px;transform-origin:0 0;'>Icon set for Startup company</div><div id='t63' style='position:absolute;top:1212.22px;font-size:27.62px;line-height:27.62px;font-weight:400;color:#757575;white-space:nowrap;letter-spacing:0.000px;transform:scaleX(0.9159);right:1123.20px;transform-origin:100% 0;'>Developer Team</div><div id='t64' style='position:absolute;top:1279.39px;font-size:29.07px;line-height:29.07px;font-weight:400;-webkit-text-stroke-width:0.55px;color:#222222;white-space:nowrap;letter-spacing:0.000px;transform:scaleX(0.8834);left:574.00px;transform-origin:0 0;'>Create Landing page</div><div id='t65' style='position:absolute;top:1280.62px;font-size:27.62px;line-height:27.62px;font-weight:400;color:#757575;white-space:nowrap;letter-spacing:0.000px;transform:scaleX(0.9206);right:1122.20px;transform-origin:100% 0;'>Design Team</div><div id='t66' style='position:absolute;top:1348.89px;font-size:29.07px;line-height:29.07px;font-weight:400;-webkit-text-stroke-width:0.55px;color:#222222;white-space:nowrap;letter-spacing:0.000px;transform:scaleX(0.8834);left:574.00px;transform-origin:0 0;'>Create Landing page</div><div id='t67' style='position:absolute;top:1350.12px;font-size:27.62px;line-height:27.62px;font-weight:400;color:#757575;white-space:nowrap;letter-spacing:0.000px;transform:scaleX(0.9406);right:1123.20px;transform-origin:100% 0;'>Illustrator Team</div><div id='t68' style='position:absolute;top:767.39px;font-size:29.07px;line-height:29.07px;font-weight:700;color:#202020;white-space:nowrap;letter-spacing:0.000px;transform:scaleX(0.9844);left:1567.00px;transform-origin:0 0;'>Report for this week</div><div id='t69' style='position:absolute;top:846.74px;font-size:26.89px;line-height:26.89px;font-weight:400;-webkit-text-stroke-width:0.55px;color:#222222;white-space:nowrap;letter-spacing:0.000px;transform:scaleX(0.9523);left:1604.00px;transform-origin:0 0;'>View</div><div id='t70' style='position:absolute;top:846.74px;font-size:26.89px;line-height:26.89px;font-weight:400;-webkit-text-stroke-width:0.55px;color:#222222;white-space:nowrap;letter-spacing:-0.031px;left:1739.20px;transform-origin:0 0;'>Visitor</div><div id='t71' style='position:absolute;top:924.35px;font-size:26.16px;line-height:26.16px;font-weight:400;color:#757575;white-space:nowrap;letter-spacing:0.000px;transform:scaleX(0.8907);right:919.00px;transform-origin:100% 0;'>100 hr</div><div id='t72' style='position:absolute;top:1003.05px;font-size:26.16px;line-height:26.16px;font-weight:400;color:#757575;white-space:nowrap;letter-spacing:0.000px;transform:scaleX(0.9569);right:919.00px;transform-origin:100% 0;'>80 hr</div><div id='t73' style='position:absolute;top:1081.75px;font-size:26.16px;line-height:26.16px;font-weight:400;color:#757575;white-space:nowrap;letter-spacing:0.000px;transform:scaleX(0.9740);right:919.00px;transform-origin:100% 0;'>60 hr</div><div id='t74' style='position:absolute;top:1160.45px;font-size:26.16px;line-height:26.16px;font-weight:400;color:#757575;white-space:nowrap;letter-spacing:0.000px;transform:scaleX(0.9563);right:919.00px;transform-origin:100% 0;'>40 hr</div><div id='t75' style='position:absolute;top:1239.15px;font-size:26.16px;line-height:26.16px;font-weight:400;color:#757575;white-space:nowrap;letter-spacing:0.000px;transform:scaleX(0.9572);right:919.00px;transform-origin:100% 0;'>20 hr</div><div id='t76' style='position:absolute;top:1317.85px;font-size:26.16px;line-height:26.16px;font-weight:400;color:#757575;white-space:nowrap;letter-spacing:0.000px;transform:scaleX(0.9544);right:919.00px;transform-origin:100% 0;'>0 hr</div><div id='t77' style='position:absolute;top:1351.94px;font-size:26.89px;line-height:26.89px;font-weight:400;color:#757575;white-space:nowrap;letter-spacing:0.000px;transform:scaleX(0.8928);left:682.00px;width:2000px;text-align:center;transform-origin:50% 0;'>Sun</div><div id='t78' style='position:absolute;top:1351.94px;font-size:26.89px;line-height:26.89px;font-weight:400;color:#757575;white-space:nowrap;letter-spacing:0.000px;transform:scaleX(0.9085);left:806.80px;width:2000px;text-align:center;transform-origin:50% 0;'>Mon</div><div id='t79' style='position:absolute;top:1351.94px;font-size:26.89px;line-height:26.89px;font-weight:400;color:#757575;white-space:nowrap;letter-spacing:0.000px;transform:scaleX(0.9114);left:931.60px;width:2000px;text-align:center;transform-origin:50% 0;'>Tue</div><div id='t80' style='position:absolute;top:1351.94px;font-size:26.89px;line-height:26.89px;font-weight:400;color:#757575;white-space:nowrap;letter-spacing:0.000px;transform:scaleX(0.9182);left:1056.40px;width:2000px;text-align:center;transform-origin:50% 0;'>Wed</div><div id='t81' style='position:absolute;top:1351.94px;font-size:26.89px;line-height:26.89px;font-weight:400;color:#757575;white-space:nowrap;letter-spacing:0.000px;transform:scaleX(0.9112);left:1181.20px;width:2000px;text-align:center;transform-origin:50% 0;'>Thu</div><div id='t82' style='position:absolute;top:1351.94px;font-size:26.89px;line-height:26.89px;font-weight:400;color:#757575;white-space:nowrap;letter-spacing:0.000px;transform:scaleX(0.8774);left:1306.00px;width:2000px;text-align:center;transform-origin:50% 0;'>Fri</div><div id='t83' style='position:absolute;top:1351.94px;font-size:26.89px;line-height:26.89px;font-weight:400;color:#757575;white-space:nowrap;letter-spacing:0.000px;transform:scaleX(0.9171);left:1430.80px;width:2000px;text-align:center;transform-origin:50% 0;'>Sat</div><div id='t84' style='position:absolute;top:1523.39px;font-size:29.07px;line-height:29.07px;font-weight:700;color:#202020;white-space:nowrap;letter-spacing:0.000px;transform:scaleX(0.9844);left:544.60px;transform-origin:0 0;'>Report for this week</div><div id='t85' style='position:absolute;top:1602.74px;font-size:26.89px;line-height:26.89px;font-weight:400;-webkit-text-stroke-width:0.55px;color:#757575;white-space:nowrap;letter-spacing:0.000px;transform:scaleX(1.0069);left:544.60px;transform-origin:0 0;'>Project</div><div id='t86' style='position:absolute;top:1602.74px;font-size:26.89px;line-height:26.89px;font-weight:400;-webkit-text-stroke-width:0.55px;color:#757575;white-space:nowrap;letter-spacing:0.000px;transform:scaleX(0.9769);left:1268.00px;transform-origin:0 0;'>Progress</div><div id='t87' style='position:absolute;top:1602.74px;font-size:26.89px;line-height:26.89px;font-weight:400;-webkit-text-stroke-width:0.55px;color:#757575;white-space:nowrap;letter-spacing:0.000px;transform:scaleX(0.9555);left:1668.00px;transform-origin:0 0;'>Worked</div><div id='t88' style='position:absolute;top:1602.74px;font-size:26.89px;line-height:26.89px;font-weight:400;-webkit-text-stroke-width:0.55px;color:#757575;white-space:nowrap;letter-spacing:0.000px;transform:scaleX(0.9632);left:1923.20px;transform-origin:0 0;'>Due date</div><div id='t89' style='position:absolute;top:1602.74px;font-size:26.89px;line-height:26.89px;font-weight:400;-webkit-text-stroke-width:0.55px;color:#757575;white-space:nowrap;letter-spacing:0.000px;transform:scaleX(1.0093);right:101.00px;transform-origin:100% 0;'>Members</div><div id='t90' style='position:absolute;top:1698.62px;font-size:42.15px;line-height:42.15px;font-weight:400;color:#ffffff;white-space:nowrap;letter-spacing:0.000px;-webkit-text-stroke-width:1.3px;left:-418.30px;width:2000px;text-align:center;transform-origin:50% 0;'>P</div><div id='t91' style='position:absolute;top:1690.81px;font-size:28.34px;line-height:28.34px;font-weight:400;-webkit-text-stroke-width:0.55px;color:#222222;white-space:nowrap;letter-spacing:0.000px;transform:scaleX(0.9253);left:636.40px;transform-origin:0 0;'>Project Management dashboard</div><div id='t92' style='position:absolute;top:1726.73px;font-size:22.53px;line-height:22.53px;font-weight:400;color:#757575;white-space:nowrap;letter-spacing:0.000px;transform:scaleX(0.9624);left:636.40px;transform-origin:0 0;'>Design Team</div><div id='t93' style='position:absolute;top:1705.62px;font-size:27.62px;line-height:27.62px;font-weight:400;-webkit-text-stroke-width:0.55px;color:#222222;white-space:nowrap;letter-spacing:0.000px;transform:scaleX(0.9774);left:1475.00px;transform-origin:0 0;'>75%</div><div id='t94' style='position:absolute;top:1705.62px;font-size:27.62px;line-height:27.62px;font-weight:400;-webkit-text-stroke-width:0.55px;color:#222222;white-space:nowrap;letter-spacing:0.000px;transform:scaleX(0.8958);left:1667.00px;transform-origin:0 0;'>12h:50m:00s</div><div id='t95' style='position:absolute;top:1705.62px;font-size:27.62px;line-height:27.62px;font-weight:400;-webkit-text-stroke-width:0.55px;color:#222222;white-space:nowrap;letter-spacing:0.000px;transform:scaleX(0.8901);left:1924.20px;transform-origin:0 0;'>12 August 2023</div><div id='t96' style='position:absolute;top:1704.22px;font-size:29.51px;line-height:29.51px;font-weight:400;-webkit-text-stroke-width:0.55px;color:#ffffff;white-space:nowrap;letter-spacing:0.000px;left:1428.50px;width:2000px;text-align:center;transform-origin:50% 0;'>+2</div><div id='t97' style='position:absolute;top:1813.82px;font-size:42.15px;line-height:42.15px;font-weight:400;color:#ffffff;white-space:nowrap;letter-spacing:0.000px;-webkit-text-stroke-width:1.3px;left:-418.30px;width:2000px;text-align:center;transform-origin:50% 0;'>M</div><div id='t98' style='position:absolute;top:1806.01px;font-size:28.34px;line-height:28.34px;font-weight:400;-webkit-text-stroke-width:0.55px;color:#222222;white-space:nowrap;letter-spacing:0.000px;transform:scaleX(0.9183);left:636.40px;transform-origin:0 0;'>Marketing page for Fintech company</div><div id='t99' style='position:absolute;top:1841.93px;font-size:22.53px;line-height:22.53px;font-weight:400;color:#757575;white-space:nowrap;letter-spacing:0.000px;transform:scaleX(0.9624);left:636.40px;transform-origin:0 0;'>Design Team</div><div id='t100' style='position:absolute;top:1820.82px;font-size:27.62px;line-height:27.62px;font-weight:400;-webkit-text-stroke-width:0.55px;color:#222222;white-space:nowrap;letter-spacing:0.000px;transform:scaleX(0.9774);left:1475.00px;transform-origin:0 0;'>50%</div><div id='t101' style='position:absolute;top:1820.82px;font-size:27.62px;line-height:27.62px;font-weight:400;-webkit-text-stroke-width:0.55px;color:#222222;white-space:nowrap;letter-spacing:0.000px;transform:scaleX(0.8617);left:1667.00px;transform-origin:0 0;'>11h: 50m: 00s</div><div id='t102' style='position:absolute;top:1820.82px;font-size:27.62px;line-height:27.62px;font-weight:400;-webkit-text-stroke-width:0.55px;color:#222222;white-space:nowrap;letter-spacing:0.000px;transform:scaleX(0.8901);left:1924.20px;transform-origin:0 0;'>12 August 2023</div><div id='t103' style='position:absolute;top:1929.12px;font-size:42.15px;line-height:42.15px;font-weight:400;color:#ffffff;white-space:nowrap;letter-spacing:0.000px;-webkit-text-stroke-width:1.3px;left:-418.30px;width:2000px;text-align:center;transform-origin:50% 0;'>D</div><div id='t104' style='position:absolute;top:1921.31px;font-size:28.34px;line-height:28.34px;font-weight:400;-webkit-text-stroke-width:0.55px;color:#222222;white-space:nowrap;letter-spacing:0.000px;transform:scaleX(0.9014);left:636.40px;transform-origin:0 0;'>Develop landing page</div><div id='t105' style='position:absolute;top:1957.23px;font-size:22.53px;line-height:22.53px;font-weight:400;color:#757575;white-space:nowrap;letter-spacing:0.000px;transform:scaleX(0.9389);left:638.60px;transform-origin:0 0;'>Design Team</div><div id='t106' style='position:absolute;top:1936.12px;font-size:27.62px;line-height:27.62px;font-weight:400;-webkit-text-stroke-width:0.55px;color:#222222;white-space:nowrap;letter-spacing:0.000px;transform:scaleX(0.9590);left:1476.00px;transform-origin:0 0;'>25%</div><div id='t107' style='position:absolute;top:1936.12px;font-size:27.62px;line-height:27.62px;font-weight:400;-webkit-text-stroke-width:0.55px;color:#222222;white-space:nowrap;letter-spacing:0.000px;transform:scaleX(0.8895);left:1668.00px;transform-origin:0 0;'>10h:00m:00s</div><div id='t108' style='position:absolute;top:1936.12px;font-size:27.62px;line-height:27.62px;font-weight:400;-webkit-text-stroke-width:0.55px;color:#222222;white-space:nowrap;letter-spacing:0.000px;transform:scaleX(0.8843);left:1925.30px;transform-origin:0 0;'>12 August 2023</div><div id='t109' style='position:absolute;top:1934.72px;font-size:29.51px;line-height:29.51px;font-weight:400;-webkit-text-stroke-width:0.55px;color:#ffffff;white-space:nowrap;letter-spacing:0.000px;left:1428.50px;width:2000px;text-align:center;transform-origin:50% 0;'>+2</div></div></body></html>
